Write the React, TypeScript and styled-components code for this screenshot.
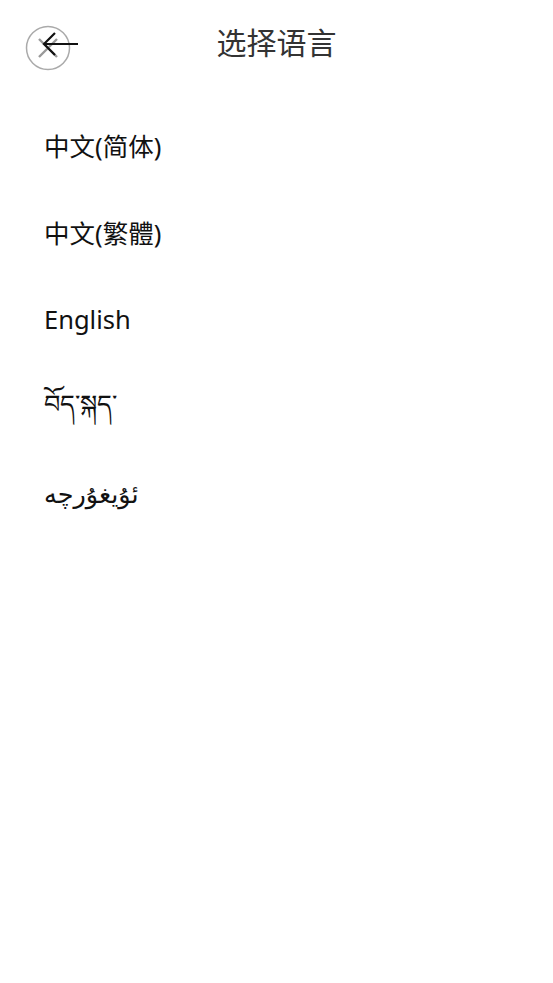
import styled, { createGlobalStyle } from 'styled-components'

const GlobalStyle = createGlobalStyle`
  html, body {
    margin: 0;
    padding: 0;
    background: #fff;
  }
  body {
    font-family: "Noto Sans", "Noto Sans CJK SC", sans-serif;
  }
`

const Page = styled.div`
  width: 553px;
  min-height: 983px;
  background: #fff;
`

const Header = styled.div`
  position: relative;
  height: 88px;
  display: flex;
  justify-content: center;
`

const Title = styled.h1`
  margin: 0;
  padding-top: 22px;
  font-family: "Noto Sans CJK SC", sans-serif;
  font-size: 30px;
  font-weight: 400;
  line-height: 38px;
  color: #333;
`

const BackButton = styled.button`
  position: absolute;
  left: 24px;
  top: 24px;
  width: 58px;
  height: 48px;
  padding: 0;
  border: none;
  background: transparent;
  cursor: pointer;

  svg {
    display: block;
  }
`

const List = styled.ul`
  list-style: none;
  margin: 0;
  padding: 13px 0 0;
`

const Item = styled.li<{ $dropY?: number }>`
  height: 87px;
  display: flex;
  align-items: center;
  padding-left: 44px;
  padding-top: ${(p) => (p.$dropY ?? 0) * 2}px;
  box-sizing: border-box;
  font-family: "Noto Sans", "Noto Sans CJK SC", "DejaVu Sans", sans-serif;
  font-size: 25.5px;
  color: #111;
  cursor: pointer;
`

const languages = [
  { label: '中文(简体)' },
  { label: '中文(繁體)' },
  { label: 'English' },
  { label: 'བོད་སྐད་', dropY: 6 },
  { label: 'ئۇيغۇرچە' },
]

function BackIcon() {
  return (
    <svg width="58" height="48" viewBox="0 0 58 48">
      <circle cx="24" cy="24" r="21.5" fill="none" stroke="#aaa" strokeWidth="1.5" />
      <path d="M15 15 L33 33 M33 15 L15 33" stroke="#999" strokeWidth="2.4" fill="none" />
      <path d="M54 20 H20 M31 9 L20 20 L31 31" stroke="#111" strokeWidth="2.2" fill="none" />
    </svg>
  )
}

function App() {
  return (
    <Page>
      <GlobalStyle />
      <Header>
        <BackButton aria-label="back">
          <BackIcon />
        </BackButton>
        <Title>选择语言</Title>
      </Header>
      <List>
        {languages.map((lang) => (
          <Item key={lang.label} $dropY={lang.dropY}>
            {lang.label}
          </Item>
        ))}
      </List>
    </Page>
  )
}

export default App
